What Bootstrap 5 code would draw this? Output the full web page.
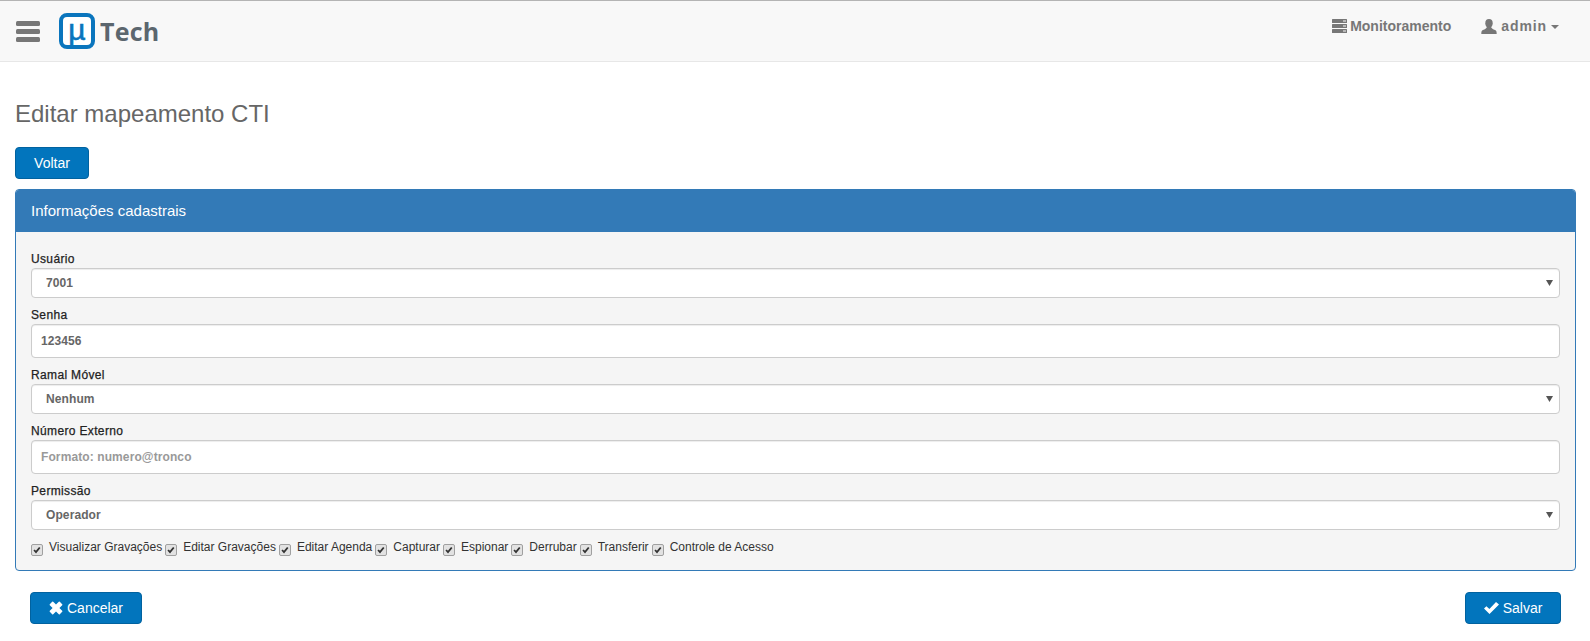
<!DOCTYPE html>
<html lang="pt-BR">
<head>
<meta charset="utf-8">
<title>Editar mapeamento CTI</title>
<link rel="stylesheet" href="https://cdn.jsdelivr.net/npm/bootstrap@5.3.0/dist/css/bootstrap.min.css">
<style>
html,body{height:100%;}
body{font-family:"Liberation Sans",Arial,sans-serif;font-size:14px;color:#333;background:#fff;overflow:hidden;}
.topbar{height:62px;padding:0 0 0 16px;background:#f8f8f8;border-top:1px solid #b4b4b4;border-bottom:1px solid #e7e7e7;flex-wrap:nowrap;}
.burger{display:block;color:#777;margin-right:19px;}
.logo-box{width:36px;height:36px;border:4px solid #0a75bd;border-radius:8px;color:#0a75bd;font:400 30px/25px "Liberation Sans",sans-serif;-webkit-text-stroke:.6px #0a75bd;text-align:center;display:block;background:#fff;}
.logo-word{font:700 25px/1 "Open Sans",sans-serif;color:#5b666e;margin-left:5px;letter-spacing:.2px;}
.top-link{font-size:14px;font-weight:700;color:#777;text-decoration:none;display:flex;align-items:center;gap:3px;}
.top-links{margin-top:-10px;}
.top-links .top-link+.top-link{margin-left:30px;margin-right:31px;}
.admin-name{letter-spacing:.9px;margin-left:1px;}
.caret-down{display:inline-block;border-top:4px solid #777;border-left:4px solid transparent;border-right:4px solid transparent;margin-left:1px;margin-top:2px;}
.page-wrap{padding:0 14px 0 15px;}
.page-title{font-size:24px;font-weight:400;color:#666;line-height:26px;margin:39px 0 20px;}
.btn-brand{background:#0275bd;border:1px solid #01629f;color:#fff;font-size:14px;border-radius:4px;height:32px;padding:0 17px;display:inline-flex;align-items:center;justify-content:center;gap:4px;}
.btn-brand:hover{background:#0268a8;color:#fff;border-color:#01629f;}
.panel{margin-top:10px;border:1px solid #337ab7;border-radius:4px;--bs-card-border-radius:4px;background:#f5f5f5;}
.panel-head{background:#337ab7;color:#fff;font-size:15px;height:42px;line-height:41px;padding:0 15px;border:0;border-radius:3px 3px 0 0!important;}
.panel-body{padding:20px 15px 0;height:338px;}
.fld-label{display:block;font-size:12px;letter-spacing:.35px;color:#222;line-height:14px;margin:0 0 2px;-webkit-text-stroke:.25px #222;}
.fld-select,.fld-input{font-size:12px;letter-spacing:.1px;font-weight:700;color:#666;border:1px solid #ccc;border-radius:4px;background-color:#fff;box-shadow:inset 0 1px 1px rgba(0,0,0,.075);}
.fld-select{height:30px;padding:0 24px 0 14px;margin-bottom:10px;background-image:url("data:image/svg+xml,%3Csvg xmlns='http://www.w3.org/2000/svg' width='8' height='7'%3E%3Cpath d='M0 0h7L3.500 6z' fill='%23555'/%3E%3C/svg%3E");background-repeat:no-repeat;background-position:right 5px center;background-size:8px 7px;}
.fld-input{height:34px;padding:0 9px;margin-bottom:10px;}
.fld-input::placeholder{color:#999;opacity:1;}
.perm-row{font-size:12px;color:#333;line-height:14px;}
.perm-row input{appearance:none;width:12px;height:12px;margin:4px 5px 0 0;border:1px solid #a0a0a0;border-radius:2px;background:#e2e2e2 url("data:image/svg+xml,%3Csvg xmlns='http://www.w3.org/2000/svg' viewBox='0 0 12 12'%3E%3Cpath d='M2.500 6l2.300 2.500 4.500-5.500' fill='none' stroke='%23333' stroke-width='2.200'/%3E%3C/svg%3E") center/100% no-repeat;flex:none;}
.perm-item{display:flex;align-items:flex-start;margin-right:3px;}
.perm-item span{margin-left:1px;}
.foot-row{padding:21px 15px 0;}
.cancel-btn{width:112px;}
.save-btn{width:96px;}
</style>
</head>
<body>
<nav class="navbar topbar justify-content-start">
  <a href="#" class="burger" aria-label="Menu">
    <svg width="24" height="21" viewBox="0 0 24 21" fill="currentColor"><rect y="0" width="24" height="5" rx="1.500"/><rect y="8" width="24" height="5" rx="1.500"/><rect y="16" width="24" height="5" rx="1.500"/></svg>
  </a>
  <a href="#" class="d-flex align-items-center text-decoration-none">
    <span class="logo-box">µ</span><span class="logo-word">Tech</span>
  </a>
  <div class="d-flex ms-auto top-links">
    <a href="#" class="top-link">
      <svg width="15" height="14" viewBox="0 0 15 14" fill="currentColor"><rect width="15" height="4" rx=".5"/><rect y="5" width="15" height="4" rx=".5"/><rect y="10" width="15" height="4" rx=".5"/><g fill="#f8f8f8"><rect x="11" y="1.500" width="3" height="1"/><rect x="11" y="6.500" width="3" height="1"/><rect x="11" y="11.500" width="3" height="1"/></g></svg>
      Monitoramento
    </a>
    <a href="#" class="top-link">
      <svg width="16" height="15" viewBox="0 0 16 15" fill="currentColor"><ellipse cx="8" cy="4.200" rx="3.700" ry="4.200"/><path d="M5.800 7.500 C6 9 5 9.800 2 11 C.6 11.600 .3 12.500 .3 15 H15.700 C15.700 12.500 15.400 11.600 14 11 C11 9.800 10 9 10.200 7.500z"/></svg>
      <span class="admin-name">admin</span><span class="caret-down"></span>
    </a>
  </div>
</nav>

<main class="page-wrap">
  <h1 class="page-title">Editar mapeamento CTI</h1>
  <a href="#" class="btn btn-brand" style="width:74px">Voltar</a>

  <section class="card panel">
    <div class="card-header panel-head">Informações cadastrais</div>
    <div class="card-body panel-body">
      <label class="fld-label">Usuário</label>
      <select class="form-select fld-select"><option>7001</option></select>
      <label class="fld-label">Senha</label>
      <input class="form-control fld-input" type="text" value="123456">
      <label class="fld-label">Ramal Móvel</label>
      <select class="form-select fld-select"><option>Nenhum</option></select>
      <label class="fld-label">Número Externo</label>
      <input class="form-control fld-input" type="text" placeholder="Formato: numero@tronco">
      <label class="fld-label">Permissão</label>
      <select class="form-select fld-select"><option>Operador</option></select>
      <div class="d-flex perm-row">
        <label class="perm-item"><input type="checkbox" checked><span>Visualizar Gravações</span></label>
        <label class="perm-item"><input type="checkbox" checked><span>Editar Gravações</span></label>
        <label class="perm-item"><input type="checkbox" checked><span>Editar Agenda</span></label>
        <label class="perm-item"><input type="checkbox" checked><span>Capturar</span></label>
        <label class="perm-item"><input type="checkbox" checked><span>Espionar</span></label>
        <label class="perm-item"><input type="checkbox" checked><span>Derrubar</span></label>
        <label class="perm-item"><input type="checkbox" checked><span>Transferir</span></label>
        <label class="perm-item"><input type="checkbox" checked><span>Controle de Acesso</span></label>
      </div>
    </div>
  </section>

  <div class="d-flex justify-content-between foot-row">
    <button class="btn btn-brand cancel-btn" type="button">
      <svg width="14" height="14" viewBox="0 0 14 14" fill="#fff"><path d="M4.200 .8 7 3.600 9.800 .8q.5-.5 1 0l2.400 2.400q.5.500 0 1L10.400 7l2.800 2.800q.5.500 0 1l-2.400 2.400q-.5.500-1 0L7 10.400l-2.800 2.800q-.5.500-1 0L.8 10.800q-.5-.5 0-1L3.600 7 .8 4.200q-.5-.5 0-1L3.200 .8q.5-.5 1 0z"/></svg>
      Cancelar
    </button>
    <button class="btn btn-brand save-btn" type="button">
      <svg width="15" height="12" viewBox="0 0 15 12" fill="#fff"><path d="M0 6.500 2.400 4.200 5.400 7 12 0 15 2.600 5.500 12z"/></svg>
      Salvar
    </button>
  </div>
</main>
</body>
</html>
